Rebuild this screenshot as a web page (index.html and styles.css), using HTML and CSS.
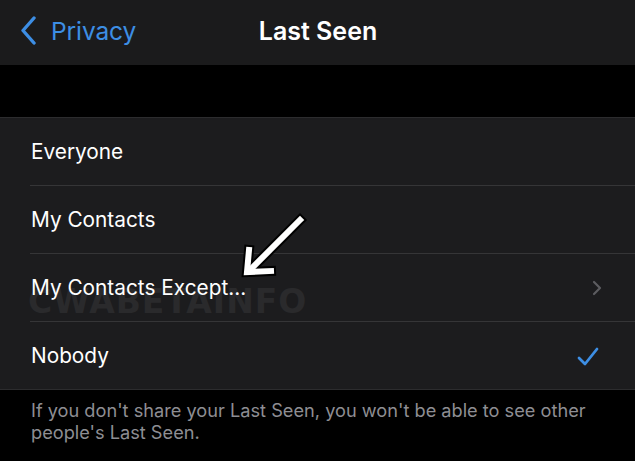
FILE: index.html
```html
<!DOCTYPE html>
<html>
<head>
<meta charset="utf-8">
<link rel="stylesheet" href="styles.css">
</head>
<body>
<div class="screen">
  <header class="nav">
    <div class="back">
      <svg class="back-icon" width="18" height="30" viewBox="0 0 18 30"><path d="M15 2 L4 14.5 L15 27" fill="none" stroke="#3d8ee4" stroke-width="3.4" stroke-linecap="round" stroke-linejoin="round"/></svg>
      <span class="back-label">Privacy</span>
    </div>
    <div class="title">Last Seen</div>
  </header>
  <div class="gap"></div>
  <ul class="list">
    <li class="row"><span class="label">Everyone</span></li>
    <li class="row"><span class="label">My Contacts</span></li>
    <li class="row">
      <span class="watermark">CWABETAINFO</span>
      <span class="label">My Contacts Except...</span>
      <svg class="chev" width="10" height="16" viewBox="0 0 10 16"><path d="M2 2 L8 8 L2 14" fill="none" stroke="#5c5c60" stroke-width="2.2" stroke-linecap="round" stroke-linejoin="round"/></svg>
    </li>
    <li class="row last">
      <span class="label">Nobody</span>
      <svg class="check" width="22" height="20" viewBox="0 0 22 20"><path d="M2 11 L8 17 L20 2" fill="none" stroke="#3d8ee4" stroke-width="2.8" stroke-linecap="round" stroke-linejoin="round"/></svg>
    </li>
  </ul>
  <p class="footer">If you don't share your Last Seen, you won't be able to see other people's Last Seen.</p>
  <svg class="arrow" width="80" height="80" viewBox="0 0 80 80">
    <g fill="none" stroke="#000" stroke-width="10" stroke-linecap="square" stroke-linejoin="miter">
      <path d="M71 10 L22 59"/>
      <path d="M20 40 L18 62 L42 61"/>
    </g>
    <g fill="none" stroke="#fff" stroke-width="6" stroke-linecap="square" stroke-linejoin="miter">
      <path d="M71 10 L22 59"/>
      <path d="M20 40 L18 62 L42 61"/>
    </g>
  </svg>
</div>
</body>
</html>
```
FILE: styles.css
```css
* { box-sizing: border-box; }
html, body { margin: 0; padding: 0; background: #000; }
body { font-family: "Inter", "Roboto", "Liberation Sans", sans-serif; }
.screen { position: relative; width: 635px; height: 461px; overflow: hidden; background: #000; }
.nav {
  height: 65px; background: #1b1b1c; position: relative;
  display: flex; align-items: center; padding-bottom: 4px;
}
.back { display: flex; align-items: center; padding-left: 19px; gap: 14px; }
.back-icon { display: block; }
.back-label { color: #3d8ee4; font-size: 24.5px; letter-spacing: -0.1px; }
.title {
  position: absolute; left: 0; right: 0; top: 0; height: 61px;
  display: flex; align-items: center; justify-content: center;
  color: #fff; font-size: 25px; font-weight: 600; padding-left: 1px;
  pointer-events: none;
}
.gap { height: 52px; background: #000; }
.list { list-style: none; margin: 0; padding: 0 0 0 30px; background: #1c1c1e; border-top: 1px solid #2c2c2e; border-bottom: 1px solid #2c2c2e; }
.row {
  position: relative; height: 68px; display: flex; align-items: center;
  border-bottom: 1px solid #353537; padding-right: 33px;
}
.row.last { border-bottom: none; height: 67px; }
.label { position: relative; color: #fff; font-size: 20.8px; flex: 1; padding-left: 1px; letter-spacing: 0; }
.watermark {
  position: absolute; left: -2px; top: 31px;
  font-family: "DejaVu Sans", sans-serif; font-weight: bold; font-size: 33px;
  letter-spacing: 1px; color: #2a2a2c; line-height: 1;
}
.chev { display: block; }
.check { display: block; margin-right: 3px; margin-top: 2px; }
.footer {
  margin: 0; padding: 9px 20px 0 31px; color: #8e8e93;
  font-size: 18.2px; line-height: 22px;
}
.arrow { position: absolute; left: 229px; top: 210px; }
```
